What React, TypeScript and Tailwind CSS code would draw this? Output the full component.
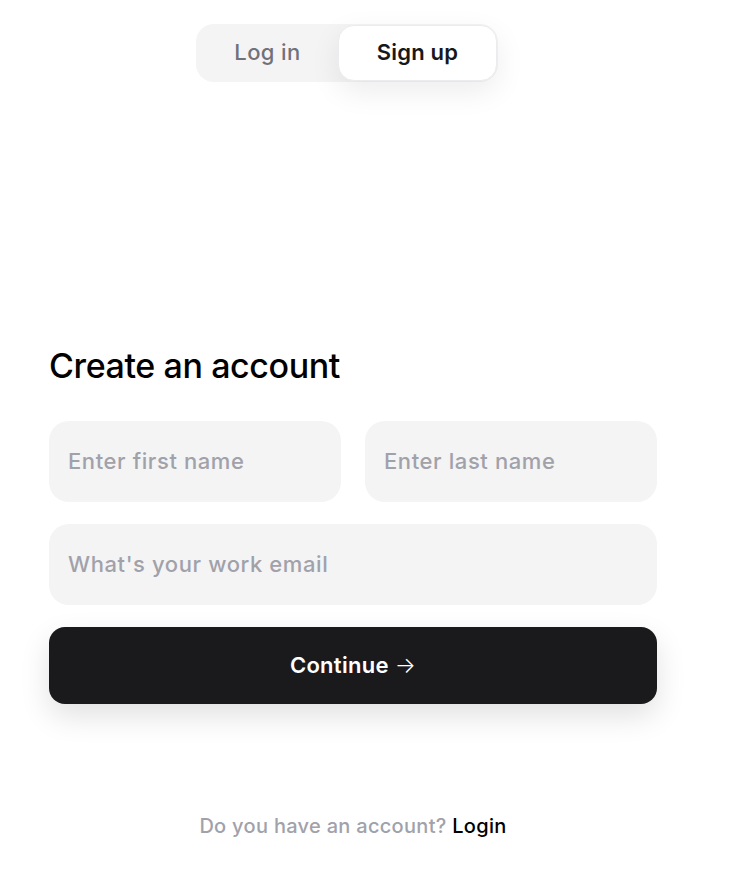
import React from "react";

export default function App() {
  return (
    <div
      className="min-h-[884px] w-[744px] bg-white"
      style={{ fontFamily: "Inter, 'Liberation Sans', sans-serif" }}
    >
      <div className="flex justify-center pt-[24px] pr-[50px]">
        <div className="flex h-[58px] w-[302px] rounded-[18px] bg-[#f4f4f5] p-[1px]">
          <button className="flex w-[141px] items-center justify-center pb-[1px] text-[22px] font-medium tracking-[0.4px] text-[#71717a]">
            Log in
          </button>
          <button className="flex flex-1 items-center justify-center rounded-[16px] border border-[#ececee] bg-white pb-[1px] text-[22px] font-semibold tracking-[0.2px] text-[#18181b] shadow-[0_10px_30px_rgba(0,0,0,0.08)]">
            Sign up
          </button>
        </div>
      </div>

      <div className="ml-[49px] mt-[263px] w-[608px]">
        <h1 className="text-[34px] font-medium leading-[42px] tracking-[-0.4px] text-black">
          Create an account
        </h1>
        <div className="mt-[34px] grid grid-cols-2 gap-[24px]">
          <input
            placeholder="Enter first name"
            className="h-[81px] rounded-[20px] bg-[#f4f4f5] px-[19px] pb-[2px] text-[22px] font-medium tracking-[0.6px] text-[#18181b] outline-none placeholder:text-[#a1a1aa]"
          />
          <input
            placeholder="Enter last name"
            className="h-[81px] rounded-[20px] bg-[#f4f4f5] px-[19px] pb-[2px] text-[22px] font-medium tracking-[0.6px] text-[#18181b] outline-none placeholder:text-[#a1a1aa]"
          />
        </div>
        <input
          placeholder="What's your work email"
          className="mt-[22px] block h-[81px] w-full rounded-[20px] bg-[#f4f4f5] px-[19px] pb-[2px] text-[22px] font-medium tracking-[0.6px] text-[#18181b] outline-none placeholder:text-[#a1a1aa]"
        />
        <button className="mt-[22px] flex h-[77px] w-full items-center justify-center gap-[6px] rounded-[16px] bg-[#1a1a1c] pb-[1px] text-[22px] font-semibold tracking-[0.3px] text-white shadow-[0_12px_30px_rgba(0,0,0,0.12)]">
          <span>Continue</span>
          <span className="font-light">→</span>
        </button>
      </div>

      <p className="mt-[107px] pr-[38px] text-center text-[20px] font-medium tracking-[0.3px] text-[#a1a1aa]">
        Do you have an account? <span className="text-black">Login</span>
      </p>
    </div>
  );
}
